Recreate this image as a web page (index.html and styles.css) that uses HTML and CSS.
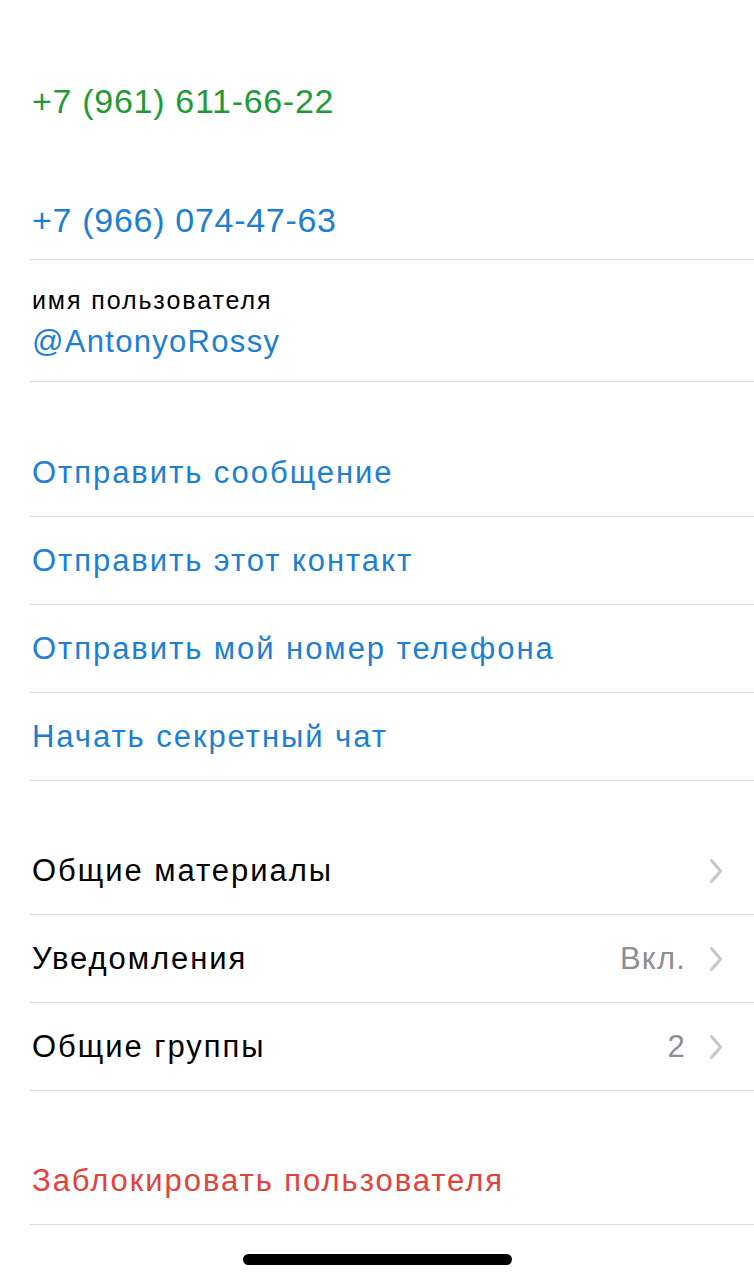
FILE: index.html
```html
<!DOCTYPE html>
<html lang="ru">
<head>
<meta charset="utf-8">
<link rel="stylesheet" href="styles.css">
</head>
<body>
<div class="screen">
  <div class="group phones">
    <div class="phone-row first"><span class="phone green">+7 (961) 611-66-22</span></div>
    <div class="phone-row"><span class="phone blue">+7 (966) 074-47-63</span></div>
    <div class="user-row">
      <div class="label">имя пользователя</div>
      <div class="value blue">@AntonyoRossy</div>
    </div>
  </div>

  <div class="group">
    <div class="row blue">Отправить сообщение</div>
    <div class="row blue">Отправить этот контакт</div>
    <div class="row blue">Отправить мой номер телефона</div>
    <div class="row blue">Начать секретный чат</div>
  </div>

  <div class="group">
    <div class="row nav"><span class="title">Общие материалы</span><span class="chev"><svg width="16" height="26" viewBox="0 0 16 26"><path d="M3.5 2.5 L12.5 13 L3.5 23.5" fill="none" stroke="#c6c6c9" stroke-width="3" stroke-linecap="round" stroke-linejoin="round"/></svg></span></div>
    <div class="row nav"><span class="title">Уведомления</span><span class="detail">Вкл.</span><span class="chev"><svg width="16" height="26" viewBox="0 0 16 26"><path d="M3.5 2.5 L12.5 13 L3.5 23.5" fill="none" stroke="#c6c6c9" stroke-width="3" stroke-linecap="round" stroke-linejoin="round"/></svg></span></div>
    <div class="row nav"><span class="title">Общие группы</span><span class="detail">2</span><span class="chev"><svg width="16" height="26" viewBox="0 0 16 26"><path d="M3.5 2.5 L12.5 13 L3.5 23.5" fill="none" stroke="#c6c6c9" stroke-width="3" stroke-linecap="round" stroke-linejoin="round"/></svg></span></div>
  </div>

  <div class="group">
    <div class="row red">Заблокировать пользователя</div>
  </div>

  <div class="home-bar"><div class="home-indicator"></div></div>
</div>
</body>
</html>
```

FILE: styles.css
```css
html, body {
  margin: 0;
  padding: 0;
  background: #ffffff;
}
body {
  font-family: "Liberation Sans", Arial, sans-serif;
  color: #000;
}
.screen {
  width: 754px;
  height: 1280px;
  overflow: hidden;
}
.green { color: #1f9b35; }
.blue { color: #1b7fd6; }
.red { color: #e5413b; }

.phones {
  padding-top: 20px;
}
.group + .group {
  margin-top: 46px;
}
.group:first-child + .group {
  margin-top: 47px;
}
.phone-row {
  margin-left: 30px;
  height: 120px;
  box-sizing: border-box;
  display: flex;
  align-items: flex-end;
  border-bottom: 1px solid #dcdcdc;
}
.phone-row.first {
  border-bottom: none;
}
.phone {
  display: block;
  padding-left: 2px;
  font-size: 34px;
  line-height: 78px;
  letter-spacing: 0.7px;
}
.user-row {
  margin-left: 30px;
  height: 122px;
  box-sizing: border-box;
  border-bottom: 1px solid #dcdcdc;
  padding-left: 2px;
  padding-top: 26px;
}
.user-row .label {
  font-size: 25px;
  line-height: 28px;
  letter-spacing: 1.9px;
}
.user-row .value {
  font-size: 31px;
  line-height: 36px;
  margin-top: 10px;
  letter-spacing: 1.3px;
}
.row {
  margin-left: 30px;
  height: 88px;
  box-sizing: border-box;
  border-bottom: 1px solid #dcdcdc;
  padding-left: 2px;
  display: flex;
  align-items: center;
  font-size: 31px;
  letter-spacing: 1.95px;
}
.row.nav {
  padding-right: 30px;
}
.row .title {
  flex: 1;
}
.row .detail {
  color: #8e8e93;
  margin-right: 22px;
  letter-spacing: 1.2px;
}
.chev {
  display: flex;
  align-items: center;
}
.home-bar {
  display: flex;
  justify-content: center;
  padding-top: 29px;
}
.home-indicator {
  width: 269px;
  height: 11px;
  border-radius: 6px;
  background: #000;
}
```
